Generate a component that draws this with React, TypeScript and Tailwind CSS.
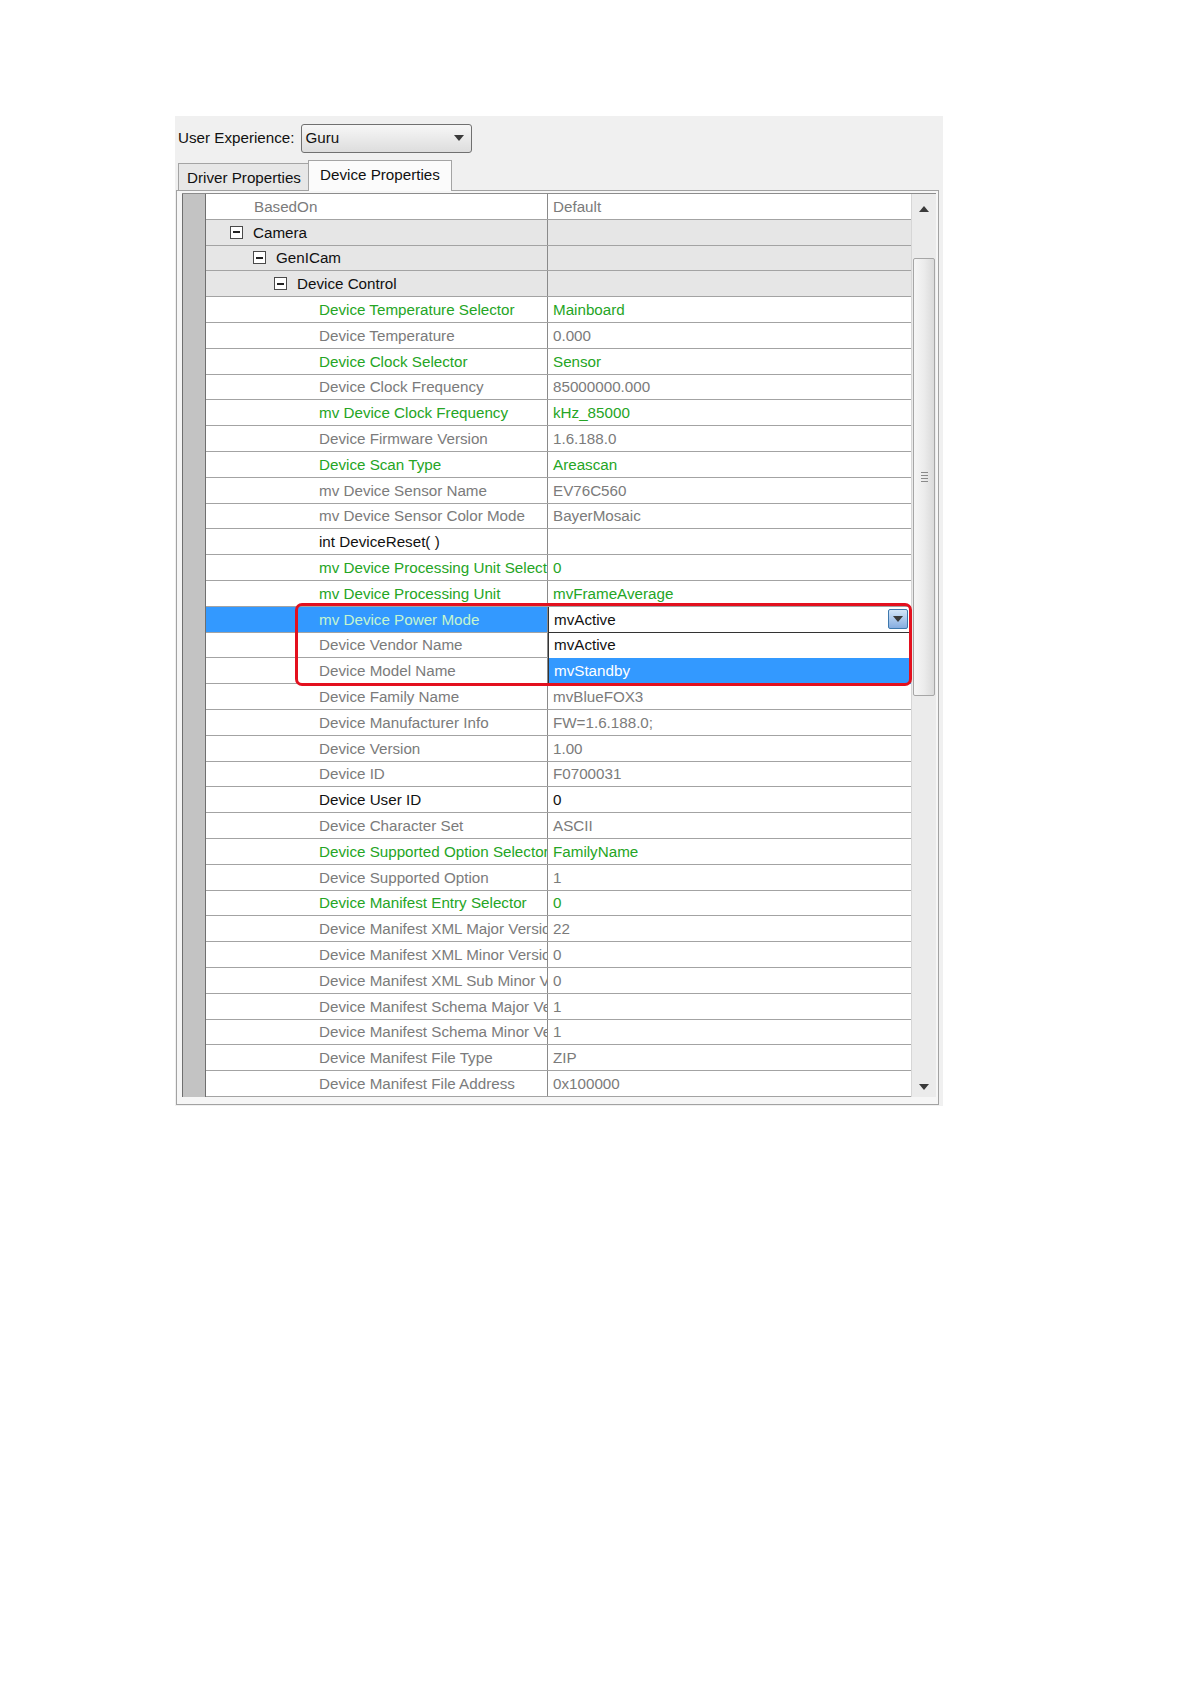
import React from "react";

type Kind = "grey" | "green" | "black";

const textColor: Record<Kind, string> = {
  grey: "text-[#7b7b7b]",
  green: "text-[#25a525]",
  black: "text-[#111111]",
};

const props: [string, string, Kind][] = [
  ["Device Temperature Selector", "Mainboard", "green"],
  ["Device Temperature", "0.000", "grey"],
  ["Device Clock Selector", "Sensor", "green"],
  ["Device Clock Frequency", "85000000.000", "grey"],
  ["mv Device Clock Frequency", "kHz_85000", "green"],
  ["Device Firmware Version", "1.6.188.0", "grey"],
  ["Device Scan Type", "Areascan", "green"],
  ["mv Device Sensor Name", "EV76C560", "grey"],
  ["mv Device Sensor Color Mode", "BayerMosaic", "grey"],
  ["int DeviceReset( )", "", "black"],
  ["mv Device Processing Unit Selector", "0", "green"],
  ["mv Device Processing Unit", "mvFrameAverage", "green"],
  ["mv Device Power Mode", "mvActive", "green"],
  ["Device Vendor Name", "", "grey"],
  ["Device Model Name", "", "grey"],
  ["Device Family Name", "mvBlueFOX3", "grey"],
  ["Device Manufacturer Info", "FW=1.6.188.0;", "grey"],
  ["Device Version", "1.00", "grey"],
  ["Device ID", "F0700031", "grey"],
  ["Device User ID", "0", "black"],
  ["Device Character Set", "ASCII", "grey"],
  ["Device Supported Option Selector", "FamilyName", "green"],
  ["Device Supported Option", "1", "grey"],
  ["Device Manifest Entry Selector", "0", "green"],
  ["Device Manifest XML Major Version", "22", "grey"],
  ["Device Manifest XML Minor Version", "0", "grey"],
  ["Device Manifest XML Sub Minor Version", "0", "grey"],
  ["Device Manifest Schema Major Version", "1", "grey"],
  ["Device Manifest Schema Minor Version", "1", "grey"],
  ["Device Manifest File Type", "ZIP", "grey"],
  ["Device Manifest File Address", "0x100000", "grey"],
];

function MinusBox() {
  return (
    <span className="w-[13px] h-[13px] border border-[#4a4a4a] bg-white flex items-center justify-center shrink-0">
      <span className="w-[7px] h-[1.5px] bg-[#222]" />
    </span>
  );
}

function Category({ label, indent }: { label: string; indent: string }) {
  return (
    <div className="flex h-[25.83px] border-b border-[#a3a3a3] bg-[#e6e6e6]">
      <div className={`w-[342px] shrink-0 border-r border-[#8a8a8a] flex items-center gap-[10px] ${indent}`}>
        <MinusBox />
        <span className="text-[#111]">{label}</span>
      </div>
      <div className="flex-1" />
    </div>
  );
}

function Arrow({ up }: { up?: boolean }) {
  return (
    <svg width="10" height="6" viewBox="0 0 10 6">
      {up ? <path d="M0 6 L5 0 L10 6 Z" fill="#3a3a3a" /> : <path d="M0 0 L10 0 L5 6 Z" fill="#3a3a3a" />}
    </svg>
  );
}

function PropRow({ name, value, kind }: { name: string; value: string; kind: Kind }) {
  const selected = name === "mv Device Power Mode";
  if (selected) {
    return (
      <div className="flex h-[25.83px] border-b border-[#a3a3a3] bg-white">
        <div className="w-[342px] shrink-0 border-r border-[#8a8a8a] bg-[#3399ff] pl-[113px] flex items-center whitespace-nowrap overflow-hidden">
          <span className="text-[#c4f5cf]">{name}</span>
        </div>
        <div className="flex-1 relative flex items-center pl-[5px] border-l border-[#333]">
          <span className="text-[#111]">{value}</span>
          <span className="ml-auto mr-[3px] w-[20px] h-[20px] rounded-[2px] border border-[#3d78ad] bg-gradient-to-b from-[#d3e5f7] to-[#86ade0] flex items-center justify-center">
            <Arrow />
          </span>
          {/* opened list */}
          <div className="absolute left-[-1px] right-0 top-full z-10 flex flex-col bg-white border-l border-t border-[#333]">
            <div className="h-[25px] flex items-center pl-[5px] text-[#111]">mvActive</div>
            <div className="h-[26px] flex items-center pl-[5px] bg-[#3399ff] text-white">mvStandby</div>
          </div>
        </div>
      </div>
    );
  }
  return (
    <div className="flex h-[25.83px] border-b border-[#a3a3a3] bg-white">
      <div className="w-[342px] shrink-0 border-r border-[#8a8a8a] pl-[113px] flex items-center whitespace-nowrap overflow-hidden">
        <span className={textColor[kind]}>{name}</span>
      </div>
      <div className="flex-1 flex items-center pl-[5px] whitespace-nowrap">
        <span className={textColor[kind]}>{value}</span>
      </div>
    </div>
  );
}

export default function App() {
  return (
    <div className="relative min-h-[1684px] bg-white pt-[116px] pl-[175px] font-['Liberation_Sans',Arial,sans-serif] text-[15.2px] leading-none">
      <div className="w-[768px] bg-[#f0f0f0] pb-[1px]">
        {/* header */}
        <div className="h-[44px] flex items-center pl-[3px]">
          <span className="text-[#111]">User Experience:</span>
          <div className="ml-[6px] w-[171px] h-[29px] rounded-[3px] border border-[#707070] bg-gradient-to-b from-[#f7f7f7] to-[#dddddd] flex items-center pl-[4px] pr-[7px]">
            <span className="text-[#111]">Guru</span>
            <span className="ml-auto">
              <Arrow />
            </span>
          </div>
        </div>

        {/* tabs */}
        <div className="h-[30px] flex items-end pl-[3px]">
          <div className="w-[131px] h-[27px] border border-b-0 border-[#a4a4a4] bg-[#e7e7e7] flex items-center pl-[8px] pt-[2px] text-[#111]">
            Driver Properties
          </div>
          <div className="relative z-10 -ml-px -mb-px w-[144px] h-[31px] border border-b-0 border-[#a4a4a4] bg-[#fbfbfb] flex items-center pl-[11px] pb-[2px] text-[#111]">
            Device Properties
          </div>
        </div>

        {/* property grid frame */}
        <div className="ml-[1px] w-[763px] h-[915px] border border-[#a2a2a2] bg-[#f6f6f6] pt-[2px] pl-[5px] pr-[2px] pb-[7px]">
          <div className="flex h-full border-t border-[#8c8c8c]">
            <div className="w-[24px] shrink-0 border-l border-r border-[#6f6f6f] bg-[#c3c3c3]" />
            <div className="w-[705px] shrink-0 flex flex-col">
              <div className="flex h-[25.83px] border-b border-[#a3a3a3] bg-white">
                <div className="w-[342px] shrink-0 border-r border-[#8a8a8a] pl-[48px] flex items-center">
                  <span className="text-[#7b7b7b]">BasedOn</span>
                </div>
                <div className="flex-1 flex items-center pl-[5px]">
                  <span className="text-[#7b7b7b]">Default</span>
                </div>
              </div>
              <Category label="Camera" indent="pl-[24px]" />
              <Category label="GenICam" indent="pl-[47px]" />
              <Category label="Device Control" indent="pl-[68px]" />
              {props.map(([n, v, k]) => (
                <PropRow key={n} name={n} value={v} kind={k} />
              ))}
            </div>
            {/* scrollbar */}
            <div className="w-[25px] shrink-0 flex flex-col bg-[#ebebeb] border-l border-[#d6d6d6]">
              <div className="h-[30px] flex items-center justify-center">
                <Arrow up />
              </div>
              <div className="mt-[34px] ml-[1px] w-[22px] h-[438px] rounded-[2px] border border-[#a6a6a6] bg-gradient-to-r from-[#f6f6f6] via-[#ececec] to-[#dadada] flex flex-col items-center justify-center gap-[2px]">
                <span className="w-[7px] h-px bg-[#8a8a8a]" />
                <span className="w-[7px] h-px bg-[#8a8a8a]" />
                <span className="w-[7px] h-px bg-[#8a8a8a]" />
                <span className="w-[7px] h-px bg-[#8a8a8a]" />
              </div>
              <div className="flex-1" />
              <div className="h-[20px] flex items-center justify-center">
                <Arrow />
              </div>
            </div>
          </div>
        </div>
      </div>

      {/* red annotation frame */}
      <div className="absolute left-[295px] top-[603px] w-[617px] h-[83px] border-[3px] border-[#e3101e] rounded-[7px] pointer-events-none z-20" />
    </div>
  );
}
